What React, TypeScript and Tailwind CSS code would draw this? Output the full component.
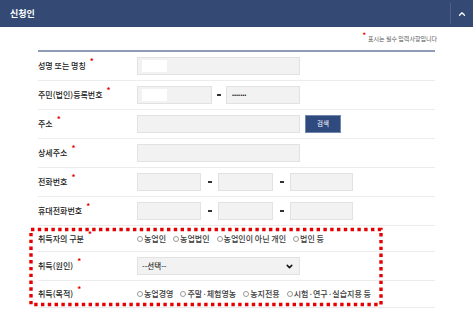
import React from 'react';
import { ChevronUp, ChevronDown } from 'lucide-react';

// 신청인 form section

const Req = () => (
  <span className="relative -top-[5px] ml-[4px] text-[8px] font-bold leading-none text-[#e60000]">*</span>
);

const Box = ({ w, children }: { w: string; children?: React.ReactNode }) => (
  <div className={`${w} h-[18px] bg-[#f2f2f2] border border-[#e2e2e2] flex items-center px-[4px]`}>{children}</div>
);

const Dash = ({ w }: { w: string }) => (
  <div className={`${w} flex justify-center`}>
    <div className="w-[4px] h-[2px] bg-[#333]" />
  </div>
);

const Radio = ({ label }: { label: string }) => (
  <span className="flex items-center text-[8px] font-medium text-[#3a3a3a] whitespace-nowrap">
    <span className="w-[6px] h-[6px] rounded-full border border-[#999] mr-[1px]" />
    {label}
  </span>
);

const Row = ({
  label,
  req = true,
  h = 'h-[29px]',
  children,
}: {
  label: string;
  req?: boolean;
  h?: string;
  children?: React.ReactNode;
}) => (
  <div className={`${h} flex items-center border-b border-[#ececec]`}>
    <div className="w-[99px] flex items-center text-[8px] font-medium text-[#222] whitespace-nowrap">
      {label}
      {req && <Req />}
    </div>
    <div className="flex items-center">{children}</div>
  </div>
);

export default function App() {
  return (
    <div className="relative w-[473px] h-[322px] overflow-hidden bg-white font-['Noto_Sans_CJK_KR','Noto_Sans',sans-serif]">
      <div className="h-[27px] bg-[#344a75] flex items-center justify-between">
        <span className="pl-[10px] text-[9px] font-bold text-white">신청인</span>
        <div className="h-[21px] w-[23px] border-l border-[#4c6088] flex items-center justify-center">
          <ChevronUp size={10} strokeWidth={3} className="text-white" />
        </div>
      </div>

      <div className="h-[23px] flex items-center justify-end pr-[36px] text-[6px] text-[#555]">
        <span className="relative -top-[3px] mr-[2px] text-[7px] font-bold leading-none text-[#e60000]">*</span>
        표시는 필수 입력사항입니다
      </div>

      <div className="mx-[38px] border-t-2 border-[#8f9bb6]">
        <Row label="성명 또는 명칭">
          <Box w="w-[163px]">
            <div className="w-[25px] h-[12px] bg-white" />
          </Box>
        </Row>
        <Row label="주민(법인)등록번호">
          <Box w="w-[75px]">
            <div className="w-[25px] h-[12px] bg-white" />
          </Box>
          <Dash w="w-[14px]" />
          <Box w="w-[74px]">
            <span className="ml-[1px] text-[6px] leading-none text-[#222]">•••••••</span>
          </Box>
        </Row>
        <Row label="주소">
          <Box w="w-[163px]" />
          <div className="ml-[5px] w-[36px] h-[18px] bg-[#2f4a7e] border border-[#7386ab] flex items-center justify-center text-[6.5px] text-white">
            검색
          </div>
        </Row>
        <Row label="상세주소">
          <Box w="w-[163px]" />
        </Row>
        <Row label="전화번호">
          <Box w="w-[64px]" />
          <Dash w="w-[17px]" />
          <Box w="w-[55px]" />
          <Dash w="w-[17px]" />
          <Box w="w-[63px]" />
        </Row>
        <Row label="휴대전화번호">
          <Box w="w-[64px]" />
          <Dash w="w-[17px]" />
          <Box w="w-[55px]" />
          <Dash w="w-[17px]" />
          <Box w="w-[63px]" />
        </Row>
        <Row label="취득자의 구분" h="h-[26px]">
          <div className="flex items-center gap-[7px]">
            <Radio label="농업인" />
            <Radio label="농업법인" />
            <Radio label="농업인이 아닌 개인" />
            <Radio label="법인 등" />
          </div>
        </Row>
        <Row label="취득(원인)">
          <div className="w-[163px] h-[18px] bg-[#f2f2f2] border border-[#e2e2e2] flex items-center justify-between pl-[4px] pr-[5px] text-[7.5px] font-medium text-[#333]">
            --선택--
            <ChevronDown size={9} strokeWidth={4} className="text-[#111]" />
          </div>
        </Row>
        <Row label="취득(목적)" h="h-[27px]">
          <div className="flex items-center gap-[7px]">
            <Radio label="농업경영" />
            <Radio label="주말·체험영농" />
            <Radio label="농지전용" />
            <Radio label="시험·연구·실습지용 등" />
          </div>
        </Row>
      </div>

      <svg className="absolute left-0 top-0 pointer-events-none" width="473" height="322">
        <rect
          x="31"
          y="229.5"
          width="350"
          height="75"
          fill="none"
          stroke="#e60000"
          strokeWidth="3.4"
          strokeDasharray="3.4 3.4"
        />
      </svg>
    </div>
  );
}
